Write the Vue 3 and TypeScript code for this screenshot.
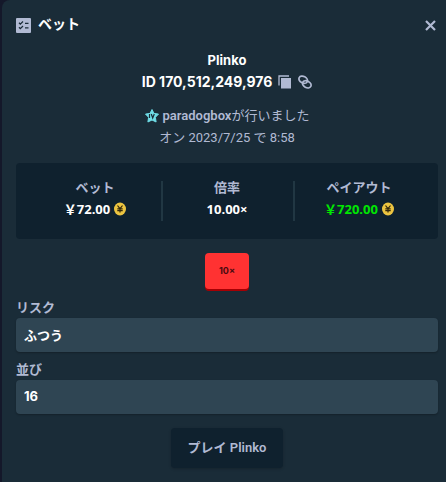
<script setup lang="ts">
interface Stat {
  label: string
  value: string
  currency: boolean
  win: boolean
}

const yen = '\uFFE5'

const stats: Stat[] = [
  { label: 'ベット', value: `${yen}72.00`, currency: true, win: false },
  { label: '倍率', value: '10.00×', currency: false, win: false },
  { label: 'ペイアウト', value: `${yen}720.00`, currency: true, win: true },
]

const fields = [
  { id: 'risk', label: 'リスク', value: 'ふつう' },
  { id: 'rows', label: '並び', value: '16' },
]
</script>

<template>
  <main class="modal">
    <header class="head">
      <svg class="head-icon" viewBox="0 0 15 15" aria-hidden="true">
        <rect width="15" height="15" rx="1" fill="#b1bad3" />
        <path d="M3 4.800l1.300 1.300L7 3.500M3 9.300l1.300 1.300L7 8M9 5.300h3.500M9 9.800h3.500" fill="none" stroke="#1a2c38" stroke-width="1.300" />
      </svg>
      <h1>ベット</h1>
      <button class="close" type="button" aria-label="閉じる">
        <svg viewBox="0 0 11 11"><path d="M1 1l9 9M10 1l-9 9" stroke="#b1bad3" stroke-width="2.200" /></svg>
      </button>
    </header>

    <section class="intro">
      <h2>Plinko</h2>
      <div class="bet-id">
        <span>ID 170,512,249,976</span>
        <button type="button" aria-label="IDをコピー">
          <svg width="14" height="14" viewBox="0 0 14 14">
            <path d="M1 10.500V1h10" fill="none" stroke="#b1bad3" stroke-width="1.300" />
            <rect x="3" y="3" width="10" height="10.500" fill="#b1bad3" />
          </svg>
        </button>
        <button type="button" aria-label="リンクをコピー">
          <svg width="14" height="14" viewBox="0 0 14 14" fill="none" stroke="#b1bad3" stroke-width="1.700">
            <ellipse cx="5.200" cy="4.700" rx="4.500" ry="3.300" transform="rotate(28 5.200 4.700)" />
            <ellipse cx="8.800" cy="9.300" rx="4.500" ry="3.300" transform="rotate(28 8.800 9.300)" />
          </svg>
        </button>
      </div>
    </section>

    <section class="meta">
      <p class="player">
        <svg width="14" height="14" viewBox="0 0 14 14" aria-hidden="true">
          <path d="M7 .5l2 3.900 4.500.700-3.100 3.200.7 4.700L7 11l-4.100 2 .7-4.700L.5 5.100 5 4.400z" fill="#6fdde7" stroke="#6fdde7" stroke-linejoin="round" />
          <path d="M4.500 5v4M6.300 5l1.400 4 1.600-4" fill="none" stroke="#1a2c38" stroke-width="1.200" />
        </svg>
        <span><b>paradogbox</b>が行いました</span>
      </p>
      <p>オン 2023/7/25 で 8:58</p>
    </section>

    <dl class="stats">
      <div v-for="stat in stats" :key="stat.label" class="stat">
        <dt>{{ stat.label }}</dt>
        <dd :class="{ win: stat.win }">
          <span>{{ stat.value }}</span>
          <svg v-if="stat.currency" width="12" height="14" viewBox="0 0 12 14" aria-hidden="true">
            <ellipse cx="6" cy="7" rx="6" ry="6.500" fill="#ecc440" />
            <path d="M3.500 3.500L6 6.700l2.500-3.200M6 6.500v4M3.300 6.800h5.400M3.300 8.700h5.400" fill="none" stroke="#33280b" stroke-width="1.200" />
          </svg>
        </dd>
      </div>
    </dl>

    <div class="result">10×</div>

    <form class="fields" @submit.prevent>
      <div v-for="field in fields" :key="field.id" class="field">
        <label :for="field.id">{{ field.label }}</label>
        <input :id="field.id" type="text" :value="field.value" readonly />
      </div>
    </form>

    <button class="play" type="button">プレイ Plinko</button>
  </main>
</template>

<style>
body {
  background: #14182a;
}
</style>

<style scoped>
* {
  box-sizing: border-box;
}

.modal {
  display: flex;
  flex-direction: column;
  margin-left: 2px;
  min-height: 100vh;
  padding: 14px 8px 14px 14px;
  border-radius: 8px 0 0 0;
  background: #1a2c38;
  color: #b1bad3;
  font-family: "Open Sans", "Noto Sans CJK JP", sans-serif;
  font-size: 13px;
  line-height: 22px;
}

h1,
h2,
p,
dl,
dd {
  margin: 0;
}

button {
  padding: 0;
  border: 0;
  background: none;
  color: inherit;
  font: inherit;
  cursor: pointer;
}

svg {
  display: block;
  flex: none;
}

.head {
  display: flex;
  align-items: center;
  gap: 7px;
  height: 22px;
}

.head-icon {
  width: 15px;
  height: 15px;
}

h1 {
  padding-bottom: 2px;
  color: #fff;
  font-size: 14px;
  font-weight: 700;
  line-height: 20px;
}

.close {
  margin-left: auto;
  padding: 2px;
}

.close svg {
  width: 11px;
  height: 11px;
}

.intro {
  margin-top: 13px;
  color: #fff;
  font-family: Inter, sans-serif;
  font-weight: 700;
  text-align: center;
}

h2 {
  font-size: 13px;
  line-height: 22px;
}

.bet-id {
  display: flex;
  align-items: center;
  justify-content: center;
  gap: 6px;
  font-size: 14px;
}

.meta {
  margin-top: 12px;
  font-family: Roboto, "Noto Sans CJK JP", sans-serif;
  text-align: center;
}

.player {
  display: flex;
  align-items: center;
  justify-content: center;
  gap: 4px;
}

.player b {
  font-weight: 600;
}

.stats {
  display: grid;
  grid-template-columns: repeat(3, 1fr);
  margin-top: 14px;
  padding: 13px 13px 15px;
  border-radius: 4px;
  background: #0f212e;
  text-align: center;
}

.stat {
  padding: 0 0 4px;
}

.stat + .stat {
  background: linear-gradient(#213743, #213743) left 5px / 2px 40px no-repeat;
}

dt {
  font-weight: 600;
}

dd {
  display: flex;
  align-items: center;
  justify-content: center;
  gap: 4px;
  color: #fff;
  font-weight: 700;
}

.win {
  color: #00e701;
}

.result {
  align-self: center;
  width: 44px;
  margin-top: 14px;
  border-radius: 4px;
  background: #ff3232;
  box-shadow: 0 2px 0 #a60004;
  color: #4a0b10;
  font-family: Inter, sans-serif;
  font-size: 9px;
  font-weight: 700;
  line-height: 36px;
  text-align: center;
}

.fields {
  display: flex;
  flex-direction: column;
  gap: 6px;
  margin-top: 7px;
}

.field {
  display: flex;
  flex-direction: column;
}

.field label {
  font-weight: 600;
}

.field input {
  width: 100%;
  height: 34px;
  padding: 0 8px 2px;
  border: 0;
  border-radius: 4px;
  background: #2f4553;
  box-shadow: 0 1px 2px #00000040;
  color: #fff;
  font: 700 13px Inter, "Noto Sans CJK JP", sans-serif;
}

.play {
  align-self: center;
  margin-top: 14px;
  padding: 9px 17px;
  border-radius: 4px;
  background: #0f212e;
  box-shadow: 0 1px 3px #00000033;
  font-family: Roboto, "Noto Sans CJK JP", sans-serif;
  font-weight: 600;
}
</style>
